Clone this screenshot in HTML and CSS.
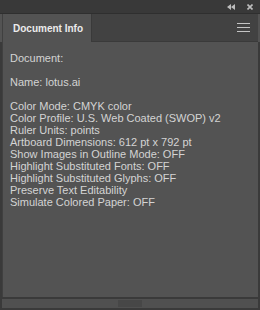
FILE: index.html
```html
<!DOCTYPE html>
<html lang="en">
  <head>
    <meta charset="UTF-8" />
    <title>Document Info</title>
    <link rel="stylesheet" href="styles.css">
  </head>
  <body>
    <div class="panel">
      <div class="titlebar">
        <svg class="icon" width="8" height="6" viewBox="0 0 8 6">
          <path d="M4 0 L0 3 L4 6 Z M8 0 L4 3 L8 6 Z" fill="#bdbdbd" />
        </svg>
        <svg class="icon close" width="6" height="6" viewBox="0 0 6 6">
          <path d="M0.5 0.5 L5.5 5.5 M5.5 0.5 L0.5 5.5" stroke="#bdbdbd" stroke-width="1.6" />
        </svg>
      </div>

      <div class="tabs">
        <div class="tab">Document Info</div>
        <div class="tab-fill">
          <svg class="menu" width="13" height="9" viewBox="0 0 13 9">
            <path d="M0 0.5 H13 M0 4.5 H13 M0 8.5 H13" stroke="#c4c4c4" stroke-width="1" />
          </svg>
        </div>
      </div>

      <div class="content">
        <p>Document:</p>
        <p class="gap">Name: lotus.ai</p>
        <p class="gap">Color Mode: CMYK color</p>
        <p>Color Profile: U.S. Web Coated (SWOP) v2</p>
        <p>Ruler Units: points</p>
        <p>Artboard Dimensions: 612 pt x 792 pt</p>
        <p>Show Images in Outline Mode: OFF</p>
        <p>Highlight Substituted Fonts: OFF</p>
        <p>Highlight Substituted Glyphs: OFF</p>
        <p>Preserve Text Editability</p>
        <p>Simulate Colored Paper: OFF</p>
      </div>

      <div class="footer">
        <div class="grip"></div>
      </div>
    </div>
  </body>
</html>
```

FILE: styles.css
```css
body {
  margin: 0;
  background: #3a3a3a;
  font-family: "Liberation Sans", sans-serif;
}
.panel {
  width: 260px;
  height: 310px;
  display: flex;
  flex-direction: column;
  background: #3a3a3a;
}
.titlebar {
  height: 13px;
  display: flex;
  align-items: center;
  justify-content: flex-end;
  gap: 12px;
  padding-right: 7px;
  background: #393939;
  border-bottom: 1px solid #2f2f2f;
}
.tabs {
  height: 28px;
  display: flex;
  background: #535353;
  padding-left: 2px;
}
.tab {
  width: 89px;
  display: flex;
  align-items: center;
  padding-left: 10px;
  box-sizing: border-box;
  white-space: nowrap;
  background: #535353;
  color: #ebebeb;
  font-weight: bold;
  font-size: 10px;
  border-left: 1px solid #404040;
}
.tab-fill {
  flex: 1;
  display: flex;
  align-items: center;
  justify-content: flex-end;
  padding-right: 8px;
  background: #424242;
  border-left: 1px solid #3a3a3a;
  border-bottom: 1px solid #3a3a3a;
  margin-right: 2px;
}
.content {
  flex: 1;
  background: #535353;
  padding: 10px 0 0 7px;
  margin: 0 2px;
  border-left: 1px solid #404040;
  color: #d4d4d4;
  font-size: 11px;
  line-height: 12px;
}
.content p {
  margin: 0;
}
.content .gap {
  margin-top: 12px;
}
.footer {
  height: 9px;
  display: flex;
  justify-content: center;
  align-items: center;
  background: #505050;
  border-top: 2px solid #3a3a3a;
  border-bottom: 2px solid #3a3a3a;
  margin: 0 2px;
}
.grip {
  width: 24px;
  height: 7px;
  background: #474747;
}
```
